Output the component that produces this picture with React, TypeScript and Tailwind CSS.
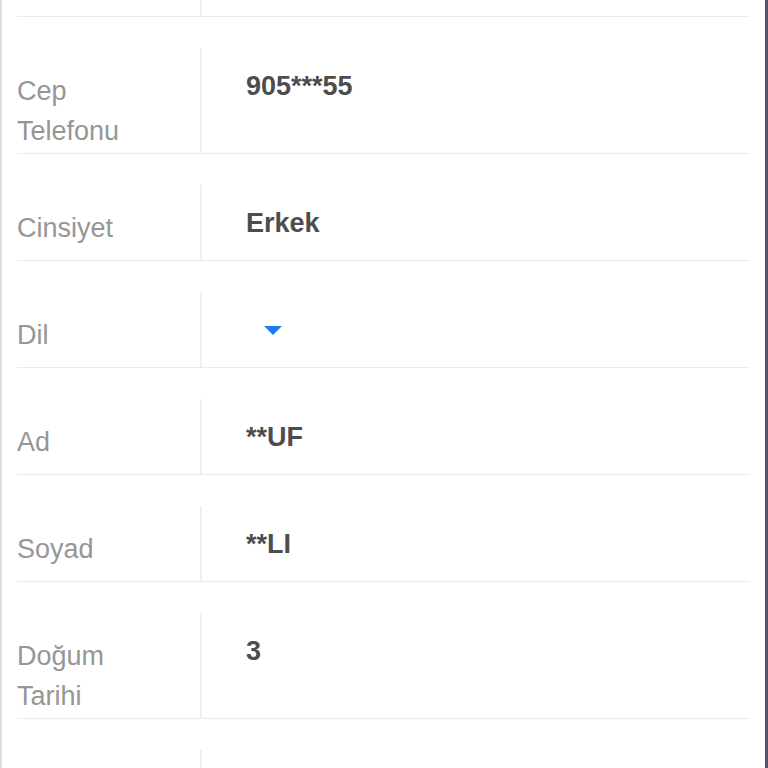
const rows: { label: string[]; value?: string; select?: boolean }[] = [
  { label: ["Cep", "Telefonu"], value: "905***55" },
  { label: ["Cinsiyet"], value: "Erkek" },
  { label: ["Dil"], select: true },
  { label: ["Ad"], value: "**UF" },
  { label: ["Soyad"], value: "**LI" },
  { label: ["Doğum", "Tarihi"], value: "3" },
];

const font = { fontFamily: '"Liberation Sans", Arial, sans-serif' };

const App = () => {
  return (
    <div
      className="flex h-[768px] w-[768px] flex-col overflow-hidden border-l-[2px] border-r-[3px] border-l-[#dcdcdc] border-r-[#56526c] bg-white pl-[15px] pr-[15px]"
      style={font}
    >
      {/* tail of the row above */}
      <div className="flex h-[17px] shrink-0 border-b border-[#ebebeb]">
        <div className="w-[183px]" />
        <div className="flex-1 border-l-[2px] border-[#f0f0f0]" />
      </div>

      {rows.map((row) => (
        <div key={row.label.join(" ")} className="flex shrink-0 border-b border-[#ebebeb] pt-[31px]">
          <div className="min-h-[75px] w-[183px] pb-[2px] pt-[23px] text-[27px] leading-[40px] text-[#969696]">
            {row.label.map((line) => (
              <div key={line}>{line}</div>
            ))}
          </div>
          <div className="flex-1 border-l-[2px] border-[#f0f0f0] pl-[44px] pt-[18px]">
            {row.select ? (
              <div className="flex h-[40px] items-center pl-[18px]">
                <svg width="18" height="9" viewBox="0 0 18 9">
                  <path d="M0 0 H18 L9 9 Z" fill="#1a7cf5" />
                </svg>
              </div>
            ) : (
              <div className="text-[27px] font-bold leading-[40px] text-[#4d4d4d]">{row.value}</div>
            )}
          </div>
        </div>
      ))}

      <div className="flex flex-1 pt-[31px]">
        <div className="w-[183px]" />
        <div className="flex-1 border-l-[2px] border-[#f0f0f0]" />
      </div>
    </div>
  );
};

export default App;
